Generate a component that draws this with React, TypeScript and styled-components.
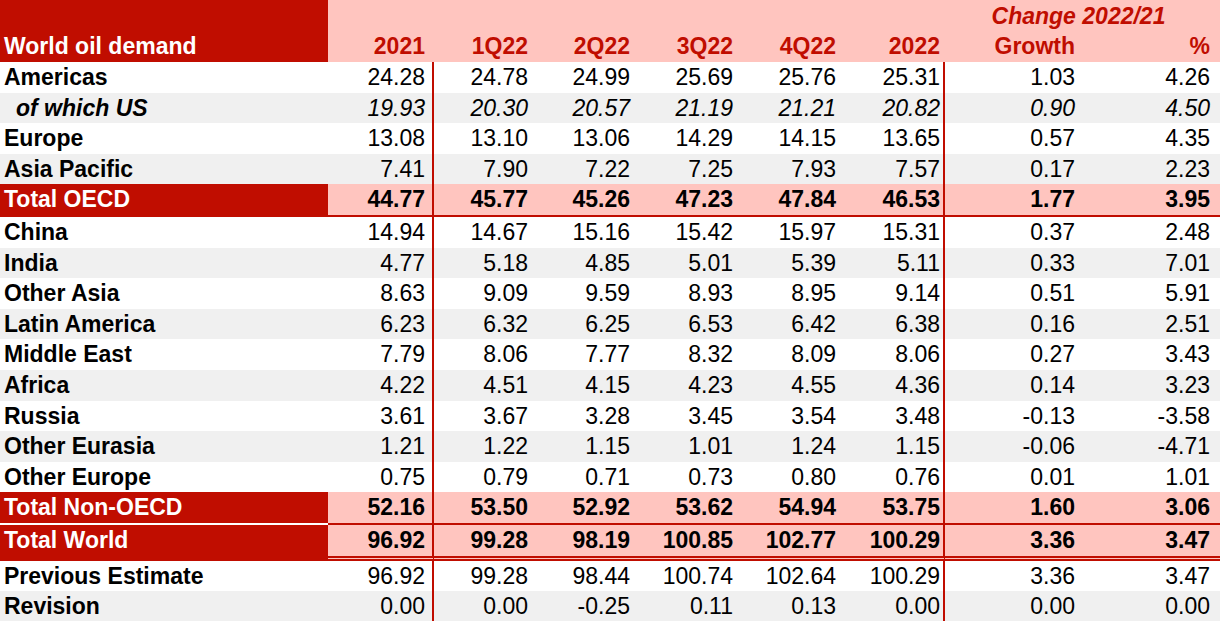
import styled, { createGlobalStyle } from "styled-components";
import { FC } from "react";

const RED = "#c00d00";
const PINK = "#ffc5bf";
const GREY = "#f0f0f0";
const COLS = "328px 106px 102px 102px 102px 102px 103px 138px 1fr";
// right padding per numeric column, border columns include their 2px rule
const PAD = [9, 8, 8, 7, 6, 5, 8, 10];
const RULED = [0, 5];

type Kind = "plain" | "sub" | "total";
type Rule = "none" | "single" | "white" | "double";

interface RowData {
  label: string;
  values: string[];
  kind: Kind;
  shade?: boolean;
  rule?: Rule;
}

const rows: RowData[] = [
  { label: "Americas", kind: "plain", values: ["24.28", "24.78", "24.99", "25.69", "25.76", "25.31", "1.03", "4.26"] },
  { label: "of which US", kind: "sub", shade: true, values: ["19.93", "20.30", "20.57", "21.19", "21.21", "20.82", "0.90", "4.50"] },
  { label: "Europe", kind: "plain", values: ["13.08", "13.10", "13.06", "14.29", "14.15", "13.65", "0.57", "4.35"] },
  { label: "Asia Pacific", kind: "plain", shade: true, values: ["7.41", "7.90", "7.22", "7.25", "7.93", "7.57", "0.17", "2.23"] },
  { label: "Total OECD", kind: "total", rule: "single", values: ["44.77", "45.77", "45.26", "47.23", "47.84", "46.53", "1.77", "3.95"] },
  { label: "China", kind: "plain", values: ["14.94", "14.67", "15.16", "15.42", "15.97", "15.31", "0.37", "2.48"] },
  { label: "India", kind: "plain", shade: true, values: ["4.77", "5.18", "4.85", "5.01", "5.39", "5.11", "0.33", "7.01"] },
  { label: "Other Asia", kind: "plain", values: ["8.63", "9.09", "9.59", "8.93", "8.95", "9.14", "0.51", "5.91"] },
  { label: "Latin America", kind: "plain", shade: true, values: ["6.23", "6.32", "6.25", "6.53", "6.42", "6.38", "0.16", "2.51"] },
  { label: "Middle East", kind: "plain", values: ["7.79", "8.06", "7.77", "8.32", "8.09", "8.06", "0.27", "3.43"] },
  { label: "Africa", kind: "plain", shade: true, values: ["4.22", "4.51", "4.15", "4.23", "4.55", "4.36", "0.14", "3.23"] },
  { label: "Russia", kind: "plain", values: ["3.61", "3.67", "3.28", "3.45", "3.54", "3.48", "-0.13", "-3.58"] },
  { label: "Other Eurasia", kind: "plain", shade: true, values: ["1.21", "1.22", "1.15", "1.01", "1.24", "1.15", "-0.06", "-4.71"] },
  { label: "Other Europe", kind: "plain", values: ["0.75", "0.79", "0.71", "0.73", "0.80", "0.76", "0.01", "1.01"] },
  { label: "Total Non-OECD", kind: "total", rule: "white", values: ["52.16", "53.50", "52.92", "53.62", "54.94", "53.75", "1.60", "3.06"] },
  { label: "Total World", kind: "total", rule: "double", values: ["96.92", "99.28", "98.19", "100.85", "102.77", "100.29", "3.36", "3.47"] },
  { label: "Previous Estimate", kind: "plain", values: ["96.92", "99.28", "98.44", "100.74", "102.64", "100.29", "3.36", "3.47"] },
  { label: "Revision", kind: "plain", shade: true, values: ["0.00", "0.00", "-0.25", "0.11", "0.13", "0.00", "0.00", "0.00"] },
];

const headers = ["2021", "1Q22", "2Q22", "3Q22", "4Q22", "2022", "Growth", "%"];

const GlobalStyle = createGlobalStyle`
  html, body {
    margin: 0;
    padding: 0;
    background: #fff;
  }
  body {
    font-family: "Liberation Sans", Arial, sans-serif;
    font-size: 23px;
    color: #000;
  }
`;

const Sheet = styled.div`
  width: 1220px;
  height: 621px;
  overflow: hidden;
`;

const Header = styled.div`
  display: grid;
  grid-template-columns: ${COLS};
  grid-template-rows: 31px 31px;
  background: ${PINK};
`;

const Corner = styled.div`
  grid-row: 1 / span 2;
  background: ${RED};
  color: #fff;
  font-weight: bold;
  display: flex;
  align-items: flex-end;
  padding: 0 0 2px 4px;
`;

const Caption = styled.div`
  grid-column: 8 / span 2;
  grid-row: 1;
  color: ${RED};
  font-weight: bold;
  font-style: italic;
  display: flex;
  align-items: center;
  justify-content: center;
  padding-right: 8px;
  padding-top: 1px;
`;

const HeadCell = styled.div<{ $col: number }>`
  grid-row: 2;
  grid-column: ${({ $col }) => $col + 2};
  color: ${RED};
  font-weight: bold;
  text-align: right;
  padding-right: ${({ $col }) => PAD[$col]}px;
  line-height: 31px;
`;

const Row = styled.div<{ $shade: boolean; $kind: Kind }>`
  display: grid;
  grid-template-columns: ${COLS};
  background: ${({ $shade, $kind }) =>
    $kind === "total" ? PINK : $shade ? GREY : "#fff"};
`;

const ruleCss = (rule: Rule, label: boolean) => {
  if (rule === "single") return `border-bottom: 2.4px solid ${RED};`;
  if (rule === "white") return `border-bottom: 2.4px solid ${label ? "#fff" : RED};`;
  if (rule === "double") return `border-bottom: 5px double ${RED};`;
  return "";
};

const Label = styled.div<{ $kind: Kind; $rule: Rule }>`
  height: 30.6px;
  line-height: 30.6px;
  font-weight: bold;
  white-space: nowrap;
  padding-left: ${({ $kind }) => ($kind === "sub" ? 16 : 4)}px;
  font-style: ${({ $kind }) => ($kind === "sub" ? "italic" : "normal")};
  background: ${({ $kind }) => ($kind === "total" ? RED : "transparent")};
  color: ${({ $kind }) => ($kind === "total" ? "#fff" : "#000")};
  ${({ $rule }) => ruleCss($rule, true)}
`;

const Num = styled.div<{ $col: number; $kind: Kind; $rule: Rule }>`
  height: 30.6px;
  line-height: 30.6px;
  text-align: right;
  white-space: nowrap;
  padding-right: ${({ $col }) => PAD[$col] - (RULED.includes($col) ? 2 : 0)}px;
  font-weight: ${({ $kind }) => ($kind === "total" ? "bold" : "normal")};
  font-style: ${({ $kind }) => ($kind === "sub" ? "italic" : "normal")};
  border-right: ${({ $col }) => (RULED.includes($col) ? `2px solid ${RED}` : "none")};
  ${({ $rule }) => ruleCss($rule, false)}
`;

const DataRow: FC<{ row: RowData }> = ({ row }) => {
  const rule = row.rule ?? "none";
  return (
    <Row $shade={!!row.shade} $kind={row.kind}>
      <Label $kind={row.kind} $rule={rule}>
        {row.label}
      </Label>
      {row.values.map((v, i) => (
        <Num key={i} $col={i} $kind={row.kind} $rule={rule}>
          {v}
        </Num>
      ))}
    </Row>
  );
};

export default function App() {
  return (
    <>
      <GlobalStyle />
      <Sheet>
        <Header>
          <Corner>World oil demand</Corner>
          <Caption>Change 2022/21</Caption>
          {headers.map((h, i) => (
            <HeadCell key={h} $col={i}>
              {h}
            </HeadCell>
          ))}
        </Header>
        {rows.map((r) => (
          <DataRow key={r.label} row={r} />
        ))}
      </Sheet>
    </>
  );
}
